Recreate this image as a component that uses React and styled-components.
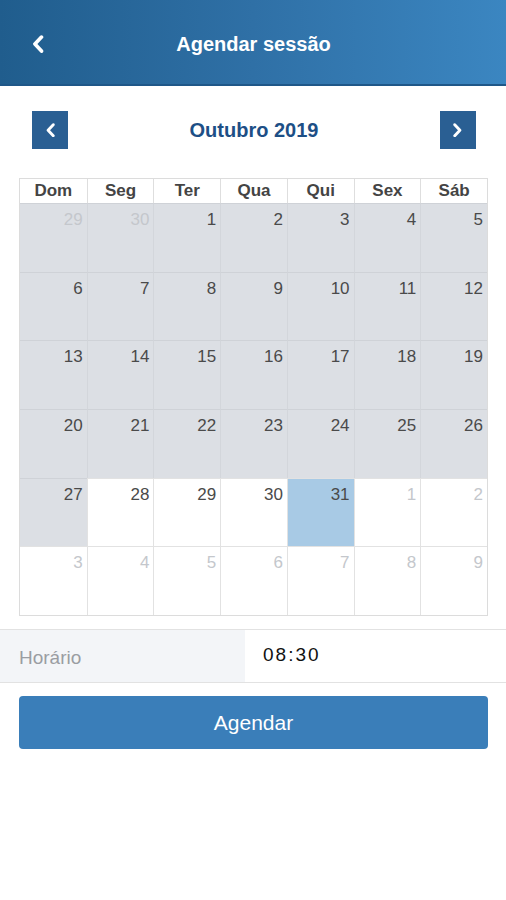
import React from "react";
import styled, { createGlobalStyle } from "styled-components";

const Global = createGlobalStyle`
  html, body { margin: 0; padding: 0; background: #fff; }
  body { font-family: "Liberation Sans", Arial, sans-serif; }
`;

const Page = styled.div`
  width: 506px;
  min-height: 900px;
  background: #fff;
`;

const TopBar = styled.header`
  height: 84px;
  background: linear-gradient(90deg, #205d8d 0%, #2f70a6 50%, #3b86c1 100%);
  border-bottom: 2px solid #1f5788;
  display: flex;
  align-items: center;
  position: relative;
  color: #fff;
`;

const BackBtn = styled.button`
  position: absolute;
  left: 26px;
  top: 30px;
  width: 24px;
  height: 28px;
  padding: 0;
  border: 0;
  background: none;
  display: flex;
  align-items: center;
  justify-content: center;
`;

const Title = styled.h1`
  flex: 1;
  margin: 0;
  text-align: center;
  font-size: 20px;
  font-weight: bold;
  padding-top: 4px;
  padding-left: 1px;
`;

const MonthBar = styled.div`
  display: flex;
  align-items: center;
  justify-content: space-between;
  padding: 25px 30px 0 32px;
  height: 38px;
`;

const NavBtn = styled.button`
  width: 36px;
  height: 38px;
  padding: 0;
  border: 0;
  background: #2a5f93;
  display: flex;
  align-items: center;
  justify-content: center;
`;

const MonthTitle = styled.div`
  font-size: 20px;
  font-weight: bold;
  color: #1d4f86;
`;

const Calendar = styled.div`
  margin: 29px 18px 0 19px;
  border: 1px solid #dcdcdc;
  display: grid;
  grid-template-columns: repeat(7, 1fr);
  grid-template-rows: 24px repeat(6, 68.7px);
`;

const HeadCell = styled.div`
  display: flex;
  align-items: center;
  justify-content: center;
  font-size: 17px;
  font-weight: bold;
  color: #444;
  background: #fff;
  border-left: ${(p) => (p.$first ? "0" : "1px solid #dedede")};
`;

const DayCell = styled.div`
  background: ${(p) => (p.$selected ? "#a8cae5" : p.$past ? "#dcdfe4" : "#fff")};
  border-left: ${(p) => (p.$first ? "0" : `1px solid ${p.$past ? "#d3d6db" : "#e2e2e2"}`)};
  border-top: 1px solid ${(p) => (p.$past ? "#cfd2d7" : "#e2e2e2")};
  text-align: right;
  padding: 6px 4px 0 0;
  font-size: 17px;
  color: ${(p) => (p.$outside ? "#c4c7cc" : "#4a4a4a")};
`;

const TimeRow = styled.div`
  margin-top: 13px;
  height: 52px;
  border-top: 1px solid #e2e2e2;
  border-bottom: 1px solid #e2e2e2;
  display: grid;
  grid-template-columns: 245px 1fr;
`;

const TimeLabel = styled.div`
  background: #f3f5f8;
  display: flex;
  align-items: center;
  padding: 4px 0 0 19px;
  font-size: 19px;
  color: #9a9da2;
`;

const TimeValue = styled.div`
  display: flex;
  align-items: center;
  padding: 0 0 2px 18px;
  font-size: 19px;
  letter-spacing: 2px;
  color: #111;
`;

const SubmitBtn = styled.button`
  display: block;
  margin: 13px 18px 0 19px;
  width: calc(100% - 37px);
  height: 53px;
  border: 0;
  border-radius: 4px;
  background: #3a7eb9;
  color: #fff;
  font-family: "Liberation Sans", Arial, sans-serif;
  font-size: 21px;
  padding-top: 2px;
`;

const Chevron = ({ dir = "left", size = 14 }) => (
  <svg width={size} height={size * 1.3} viewBox="0 0 10 13">
    <path
      d={dir === "left" ? "M7.5 1.5 L2.8 6.5 L7.5 11.5" : "M2.5 1.5 L7.2 6.5 L2.5 11.5"}
      fill="none"
      stroke="#fff"
      strokeWidth="2.6"
      strokeLinecap="round"
      strokeLinejoin="round"
    />
  </svg>
);

const heads = ["Dom", "Seg", "Ter", "Qua", "Qui", "Sex", "Sáb"];

const days = [];
const prev = [29, 30];
prev.forEach((d) => days.push({ d, outside: true, past: true }));
for (let i = 1; i <= 31; i++) {
  days.push({ d: i, past: i < 28, selected: i === 31 });
}
for (let i = 1; i <= 9; i++) days.push({ d: i, outside: true });

export default function App() {
  return (
    <Page>
      <Global />
      <TopBar>
        <BackBtn aria-label="Voltar">
          <Chevron dir="left" size={14} />
        </BackBtn>
        <Title>Agendar sessão</Title>
      </TopBar>
      <MonthBar>
        <NavBtn aria-label="Anterior">
          <Chevron dir="left" size={11} />
        </NavBtn>
        <MonthTitle>Outubro 2019</MonthTitle>
        <NavBtn aria-label="Próximo">
          <Chevron dir="right" size={11} />
        </NavBtn>
      </MonthBar>
      <Calendar>
        {heads.map((h, i) => (
          <HeadCell key={h} $first={i === 0}>
            {h}
          </HeadCell>
        ))}
        {days.map((c, i) => (
          <DayCell
            key={i}
            $first={i % 7 === 0}
            $past={c.past}
            $outside={c.outside}
            $selected={c.selected}
          >
            {c.d}
          </DayCell>
        ))}
      </Calendar>
      <TimeRow>
        <TimeLabel>Horário</TimeLabel>
        <TimeValue>08:30</TimeValue>
      </TimeRow>
      <SubmitBtn>Agendar</SubmitBtn>
    </Page>
  );
}
